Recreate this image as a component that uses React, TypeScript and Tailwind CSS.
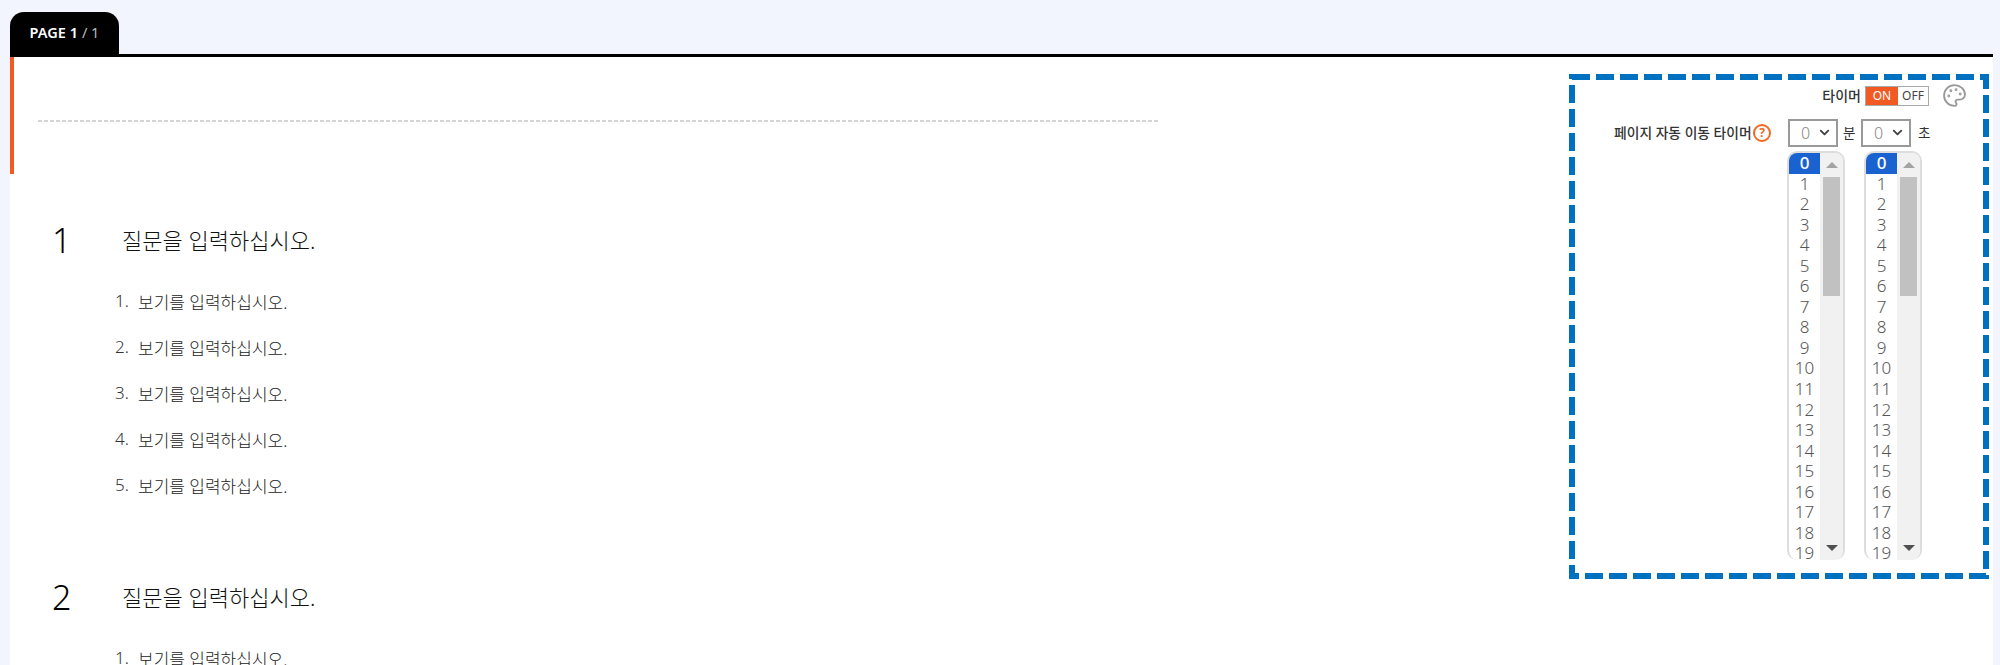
import { ChevronDown, Palette } from 'lucide-react';

const FONT = 'font-["Noto_Sans","Noto_Sans_CJK_KR",sans-serif]';
const options = [1, 2, 3, 4, 5];
const listValues = Array.from({ length: 20 }, (_, i) => i);

function Question({ no, last }: { no: number; last?: boolean }) {
  return (
    <div className={last ? 'mt-[72px]' : ''}>
      <div className="flex h-[48px] items-center">
        <span className="w-[70px] text-[34px] leading-none font-light text-black">{no}</span>
        <span className="text-[22px] font-light text-[#111]">질문을 입력하십시오.</span>
      </div>
      <ol className="mt-[25px] flex flex-col gap-[18px] pl-[63px]">
        {options.map((n) => (
          <li key={n} className="flex h-[28px] items-center">
            <span className="-mt-[5px] w-[23px] text-[17px] font-light text-[#333]">{n}.</span>
            <span className="text-[17px] font-light text-[#222]">보기를 입력하십시오.</span>
          </li>
        ))}
      </ol>
    </div>
  );
}

function TimeSelect() {
  return (
    <div className="relative h-[28px] w-[50px]">
      <select className="h-full w-full appearance-none border-2 border-[#999] bg-white pl-[11px] text-[16px] font-light text-[#888]">
        <option>0</option>
      </select>
      <ChevronDown size={15} strokeWidth={3} className="pointer-events-none absolute top-[6px] right-[6px] text-[#444]" />
    </div>
  );
}

function TimeList() {
  return (
    <div className="flex h-[409px] w-[58px] overflow-hidden rounded-[10px] border-2 border-b-0 border-[#ddd] bg-white">
      <ul className="w-[31px] text-center text-[17px] leading-[20.55px] font-light text-[#555]">
        {listValues.map((v) => (
          <li key={v} className={v === 0 ? 'bg-[#1a62d0] font-medium text-white' : ''}>
            {v}
          </li>
        ))}
      </ul>
      <div className="flex flex-1 flex-col items-center bg-[#f1f1f1] px-[3px]">
        <div className="mt-[9px] h-0 w-0 border-x-[6px] border-b-[6px] border-x-transparent border-b-[#a3a3a3]" />
        <div className="mt-[9px] h-[119px] w-full bg-[#c1c1c1]" />
        <div className="mt-[249px] h-0 w-0 border-x-[6px] border-t-[6px] border-x-transparent border-t-[#505050]" />
      </div>
    </div>
  );
}

function TimerPanel() {
  return (
    <div className="relative mt-[17px] mr-[4px] h-[505px] w-[420px] shrink-0 overflow-hidden">
      <div className="flex items-center justify-end pt-[9px] pr-[22px]">
        <span className="mr-[4px] text-[14px] font-medium text-[#333]">타이머</span>
        <div className="flex h-[20px] w-[64px] border border-[#aaa] text-[12px] leading-[18px]">
          <span className="w-[32px] bg-[#f15a22] text-center text-white">ON</span>
          <span className="flex-1 text-center text-[#444]">OFF</span>
        </div>
        <Palette size={25} strokeWidth={1.8} className="ml-[13px] text-[#999]" />
      </div>
      <div className="mt-[11px] flex items-center pl-[45px]">
        <span className="w-[139px] text-[13.8px] font-medium whitespace-nowrap text-[#333]">페이지 자동 이동 타이머</span>
        <span className="flex h-[18px] w-[18px] items-center justify-center rounded-full border-2 border-[#f26a21] text-[12px] leading-none font-bold text-[#f26a21]">
          ?
        </span>
        <div className="ml-[17px]">
          <TimeSelect />
        </div>
        <span className="ml-[5px] w-[18px] text-[13.5px] text-[#333]">분</span>
        <TimeSelect />
        <span className="ml-[7px] text-[13.5px] text-[#333]">초</span>
      </div>
      <div className="mt-[4px] flex gap-[19px] pl-[218px]">
        <TimeList />
        <TimeList />
      </div>
      {/* annotation frame drawn over the panel */}
      <svg className="absolute inset-0" width="420" height="505" fill="none">
        <rect x="3" y="3" width="414" height="499" stroke="#0070c0" strokeWidth="6" strokeDasharray="18 6" />
      </svg>
    </div>
  );
}

export default function App() {
  return (
    <div className={`h-[665px] overflow-hidden bg-[#f2f5fd] pt-[12px] pl-[10px] ${FONT}`}>
      <div className="flex h-[42px] w-[109px] items-center justify-center rounded-t-[14px] bg-black text-[14.5px] font-semibold text-white">
        PAGE 1 <span className="ml-[4px] font-normal text-[#bbb]">/ 1</span>
      </div>
      <div className="relative flex h-[611px] w-[1983px] justify-between overflow-hidden border-t-[3px] border-black bg-white">
        <div className="absolute top-0 left-0 h-[117px] w-[4px] bg-[#f15a22]" />
        <div className="w-[1150px] pl-[28px]">
          <div className="mt-[63px] h-[2px] w-[1120px] bg-[repeating-linear-gradient(90deg,#d4d4d4_0_4px,transparent_4px_6px)]" />
          <div className="mt-[94px] pl-[14px]">
            <Question no={1} />
            <Question no={2} last />
          </div>
        </div>
        <TimerPanel />
      </div>
    </div>
  );
}
